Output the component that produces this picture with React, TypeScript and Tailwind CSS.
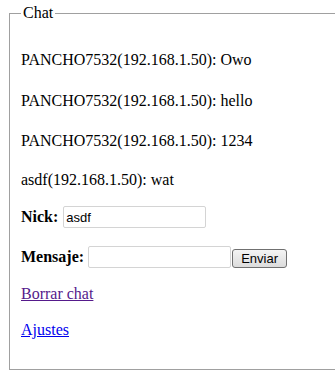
import React from "react";

const messages = [
  "PANCHO7532(192.168.1.50): Owo",
  "PANCHO7532(192.168.1.50): hello",
  "PANCHO7532(192.168.1.50): 1234",
  "asdf(192.168.1.50): wat",
];

export default function App() {
  return (
    <div className="w-[335px] h-[389px] overflow-hidden bg-white font-['Liberation_Serif',serif] text-[16px] text-black">
      <fieldset className="ml-[9px] mt-[4px] w-[340px] border border-[#a0a0a0] px-[11px] pb-[30px]">
        <legend className="px-[2px] leading-[18px]">Chat</legend>
        <div className="flex flex-col">
          {messages.map((m, i) => (
            <p
              key={i}
              className={
                "leading-[18px] h-[18px] " +
                (i === 0 ? "mt-[29px]" : i === 1 ? "mt-[23px]" : i === 2 ? "mt-[22px]" : "mt-[21px]")
              }
            >
              {m}
            </p>
          ))}
          <div className="mt-[17px] flex items-center h-[22px]">
            <b className="leading-[18px]">Nick:</b>
            <input
              defaultValue="asdf"
              className="ml-[5px] w-[143px] h-[22px] border border-[#d4d4d4] rounded-[2px] px-[2px] text-[13px] font-['Liberation_Sans',sans-serif] outline-none"
            />
          </div>
          <div className="mt-[18px] flex items-center h-[22px]">
            <b className="leading-[18px]">Mensaje:</b>
            <input className="ml-[4px] w-[143px] h-[22px] border border-[#d4d4d4] rounded-[2px] px-[2px] text-[13px] font-['Liberation_Sans',sans-serif] outline-none" />
            <button className="ml-[1px] mt-[2px] w-[55px] h-[19px] border border-[#707070] rounded-[3px] bg-gradient-to-b from-[#f4f4f4] to-[#dcdcdc] text-[13px] leading-[15px] font-['Liberation_Sans',sans-serif]">
              Enviar
            </button>
          </div>
          <a href="#" className="mt-[17px] leading-[18px] h-[18px] text-[#551a8b] underline w-fit">
            Borrar chat
          </a>
          <a href="#" className="mt-[18px] leading-[18px] h-[18px] text-[#0000ee] underline w-fit">
            Ajustes
          </a>
        </div>
      </fieldset>
    </div>
  );
}
